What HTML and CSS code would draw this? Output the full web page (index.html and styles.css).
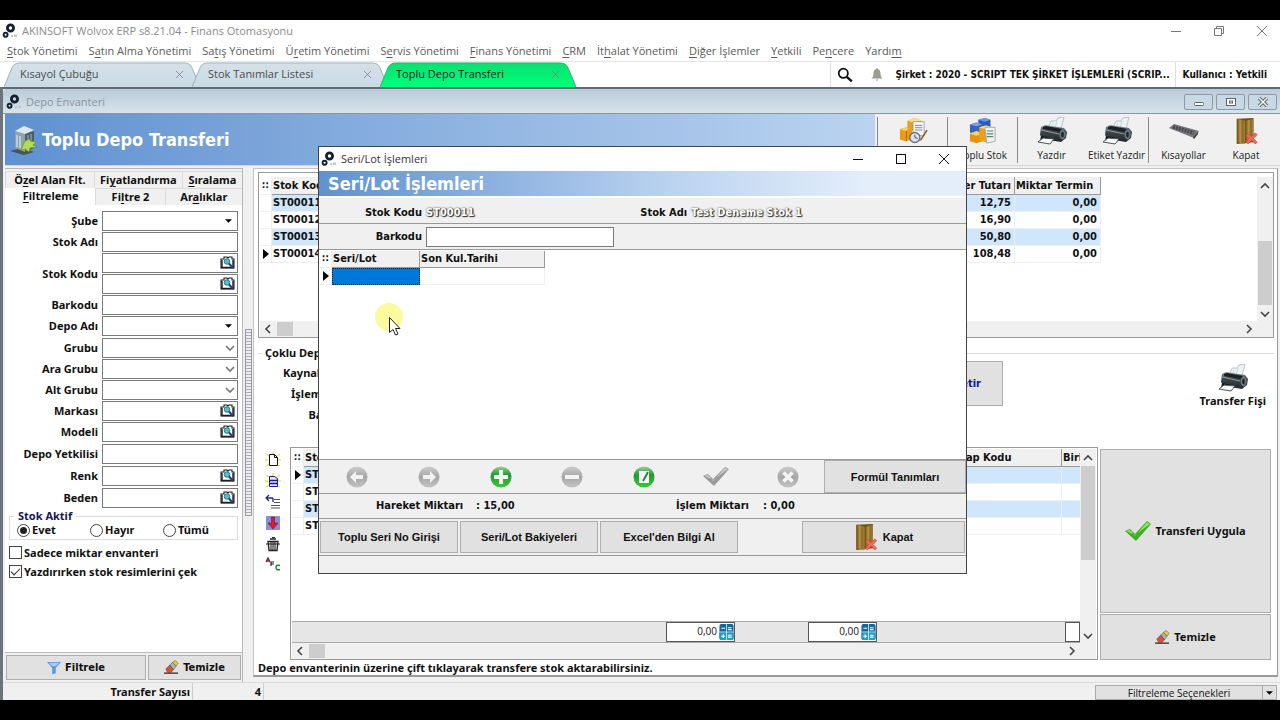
FILE: index.html
```html
<!DOCTYPE html>
<html lang="tr">
<head>
<meta charset="utf-8">
<title>AKINSOFT Wolvox ERP</title>
<link rel="stylesheet" href="styles.css">
</head>
<body>
<svg class="defs" aria-hidden="true">
  <defs>
    <linearGradient id="g-green" x1="0" y1="0" x2="0" y2="1"><stop offset="0" stop-color="#9ccf9c"/><stop offset=".4" stop-color="#1f9a2c"/><stop offset="1" stop-color="#3cc83c"/></linearGradient>
    <linearGradient id="g-gray" x1="0" y1="0" x2="0" y2="1"><stop offset="0" stop-color="#cdcdcd"/><stop offset=".5" stop-color="#a6a6a6"/><stop offset="1" stop-color="#c4c4c4"/></linearGradient>
    <linearGradient id="g-wood" x1="0" y1="0" x2="1" y2="0"><stop offset="0" stop-color="#7d5c1c"/><stop offset=".35" stop-color="#b99446"/><stop offset=".65" stop-color="#8b6a28"/><stop offset="1" stop-color="#a8843a"/></linearGradient>
    <linearGradient id="g-tab" x1="0" y1="0" x2="0" y2="1"><stop offset="0" stop-color="#d6e0e8"/><stop offset="1" stop-color="#c9dbe6"/></linearGradient>
    <linearGradient id="g-active" x1="0" y1="0" x2="0" y2="1"><stop offset="0" stop-color="#08e070"/><stop offset="1" stop-color="#00ff78"/></linearGradient>
    <linearGradient id="g-body" x1="0" y1="0" x2="0" y2="1"><stop offset="0" stop-color="#8d999f"/><stop offset=".4" stop-color="#3c464c"/><stop offset="1" stop-color="#20282c"/></linearGradient>
  </defs>
  <symbol id="i-gears" viewBox="0 0 16 16">
    <circle cx="8.500" cy="5" r="3.100" fill="none" stroke="#14202c" stroke-width="2.800"/>
    <circle cx="3.600" cy="11.800" r="2" fill="none" stroke="#14202c" stroke-width="1.900"/>
    <path d="M9 12h2v2H9zM12 11.500h3V14h-3z" fill="#c4c8cc"/>
  </symbol>
  <symbol id="i-search" viewBox="0 0 16 16"><circle cx="6.300" cy="6.300" r="4.600" fill="none" stroke="#111" stroke-width="1.800"/><path d="M9.800 9.800l5 4.600" stroke="#111" stroke-width="2.400"/></symbol>
  <symbol id="i-bell" viewBox="0 0 14 14"><path d="M7 1c3 0 3.500 3 3.600 5.400.1 2 1 3 2.200 4.200H1.200C2.400 9.400 3.300 8.400 3.400 6.400 3.500 4 4 1 7 1z" fill="#9a9d90"/><path d="M5.500 11.500h3L7 13zM6.400 0h1.200v2H6.400z" fill="#9a9d90"/></symbol>
  <symbol id="i-server" viewBox="0 0 28 32">
    <path d="M0 27l14 4 10-3-12-4z" fill="#46525c"/>
    <path d="M5 7l10 3v18L5 24z" fill="#8ea4ac"/><path d="M15 10l9-3v17l-9 4z" fill="#4c5e66"/><path d="M5 7l9-5 10 4-9 4z" fill="#dfe8ec"/>
    <path d="M7 11v12M10 12v12" stroke="#c8dade" stroke-width="1.500"/><path d="M18 11v14M21 10v13" stroke="#a4b6bc"/>
    <path d="M15 17l5-2v2l6 1-3 3 4 2-7 1-1 4-4-3-4 1 2-5z" fill="#b4da58" stroke="#6c9420" stroke-width=".7"/>
  </symbol>
  <symbol id="i-boxes" viewBox="0 0 30 30">
    <path d="M1 13l7-2 6 2v11l-7 2-6-2z" fill="#e79b18"/><path d="M1 13l7-2 6 2-6 2z" fill="#ffd068"/><path d="M8 15v11" stroke="#b06c08"/>
    <path d="M9 4l8-3 7 3v11H9z" fill="#e8a020"/><path d="M9 4l8-3 7 3-8 2z" fill="#ffdc84"/>
    <path d="M15 5h12v15H15z" fill="#f4f6f8" stroke="#8c949c" stroke-width=".8"/><path d="M17 9h8M17 11.500h8M17 14h8" stroke="#7c868e"/>
    <circle cx="17" cy="22" r="5.400" fill="#dce4ea" stroke="#66727c" stroke-width="1.500"/><path d="M17 19v3l3 1" fill="none" stroke="#445"/>
    <path d="M30 14l-7 11" stroke="#8a5a1c" stroke-width="1.600"/>
  </symbol>
  <symbol id="i-stock" viewBox="0 0 30 30">
    <path d="M10 3l7-2 6 2v11H10z" fill="#2c5cb8"/><path d="M10 3l7-2 6 2-6 2z" fill="#6c98e8"/>
    <path d="M1 8l7-2 6 2v9H1z" fill="#3466c0"/><path d="M1 8l7-2 6 2-6 2z" fill="#7ca4ec"/>
    <path d="M1 18l7-3 7 3v8l-7 2-7-2z" fill="#e39414"/><path d="M1 18l7-3 7 3-7 2z" fill="#ffd068"/>
    <path d="M11 11l7-2 7 2v14l-7 2-7-2z" fill="#eba020"/><path d="M11 11l7-2 7 2-7 2z" fill="#ffe094"/>
    <path d="M17 11h11v15l-9 2z" fill="#eef2f2" stroke="#90989c" stroke-width=".8"/><path d="M19 15h7M19 18h7M19 21h7" stroke="#5c8478" stroke-width="1.300"/>
  </symbol>
  <symbol id="i-printer" viewBox="0 0 30 28">
    <path d="M11 11l3-7 5 0 2-3 6-1-3 12z" fill="#edf3f3" stroke="#a4b0b4" stroke-width=".7"/><path d="M16 6l-2 5M20 4l-2 7" stroke="#c8d4d6"/>
    <path d="M4 10l4-2 19 3 3 4-1 6-5 4-18-3-3-4z" fill="url(#g-body)"/>
    <path d="M6 10l3-1 16 3-2 3-17-3z" fill="#1a2024"/><path d="M4 13l18 4" stroke="#8c989e" stroke-width="1.200"/>
    <ellipse cx="25.500" cy="17.500" rx="3" ry="5" fill="#6c7a82"/><ellipse cx="25.500" cy="17.500" rx="1.400" ry="3" fill="#20282c"/>
    <path d="M4 19l14 3-2 2H3z" fill="#101416"/><path d="M1 25l5-4 11 1-4 5z" fill="#fafcfc" stroke="#48545a"/>
  </symbol>
  <symbol id="i-short" viewBox="0 0 30 16"><path d="M0 5l5-4 25 7-5 7z" fill="#76767a"/><path d="M4 4l21 6" stroke="#4a4a50" stroke-width="4" stroke-dasharray="2 1"/><path d="M24 15l5-6v2l-4 5z" fill="#333"/></symbol>
  <symbol id="i-door" viewBox="0 0 24 30">
    <path d="M2 2l18-1v26l-18 2z" fill="#6e5216"/><path d="M3 2l8 2v25l-8-2z" fill="url(#g-wood)"/><path d="M12 4l8-2v23l-8 3z" fill="url(#g-wood)"/>
    <path d="M14 18l4 3 4-4 2 2-4 4 4 4-2 2-4-4-4 4-2-2 3-4-3-3z" fill="#f0685e" stroke="#c43830" stroke-width=".6"/>
  </symbol>
  <symbol id="i-book" viewBox="0 0 15 13">
    <path d="M1 3h3V1h3l1 1 1-1h3v2h2v9H1z" fill="#fff" stroke="#1c1c24" stroke-width="1.100"/><path d="M1 11.500h13M2 4v7M13 4v7" stroke="#1c1c24" stroke-width="1.400"/>
    <circle cx="7" cy="5.500" r="2.800" fill="#48c4cc" stroke="#24646c" stroke-width=".8"/><path d="M9 7.500l4 4.500" stroke="#2c3c78" stroke-width="2"/>
  </symbol>
  <symbol id="i-funnel" viewBox="0 0 16 14"><path d="M0 0h16L10 7v6l-4 1V7z" fill="#5c96e0"/><path d="M2 1h12l-4 4H6z" fill="#a4cbf6"/></symbol>
  <symbol id="i-eraser" viewBox="0 0 16 15"><path d="M0 13.500h15" stroke="#222" stroke-width="1.300"/><path d="M9 2l3-2 3 3-2 3z" fill="#f0c840" stroke="#846c20" stroke-width=".7"/><path d="M6 5l3-3 4 4-3 4z" fill="#9cb8a4" stroke="#56685c" stroke-width=".7"/><path d="M2 9l4-4 4 5-3 3H4z" fill="#d8523c" stroke="#7c3026" stroke-width=".7"/></symbol>
  <symbol id="i-check" viewBox="0 0 26 20"><path d="M0 10l5-2 5 5L22 0l4 3-15 17z" fill="#3fae28"/><path d="M1 10l4-1 5 6L22 1l3 2-15 11z" fill="#8ee060"/></symbol>
  <symbol id="i-checkgray" viewBox="0 0 26 20"><path d="M0 9l5-2 5 5L22 0l4 2-15 17z" fill="#9a9a9a"/><path d="M2 9l3-1 5 6L22 1l3 1-15 11z" fill="#cdcdcd"/></symbol>
  <symbol id="i-calc" viewBox="0 0 15 17"><rect width="15" height="17" rx="2" fill="#16679c"/><path d="M0 9h15v6q0 2-2 2H2q-2 0-2-2z" fill="#20a0bc"/><path d="M7.500 0v17M0 8.500h15" stroke="#bfe4ee"/><path d="M2 4.500h4M9 4h4M9 6h4M2 13h4M4 11v4M9 12h4M9 14h4" stroke="#fff" stroke-width="1.200"/></symbol>
  <symbol id="i-chev" viewBox="0 0 10 10"><path d="M1 3l4 4 4-4" fill="none" stroke="currentColor" stroke-width="1.600"/></symbol>
  <symbol id="i-tri" viewBox="0 0 8 4"><path d="M0 0h8L4 4z" fill="#000"/></symbol>
  <symbol id="i-row" viewBox="0 0 6 10"><path d="M0 0l6 5-6 5z" fill="#000"/></symbol>
  <symbol id="i-x" viewBox="0 0 10 10"><path d="M0 0l10 10M10 0L0 10" stroke="currentColor" fill="none"/></symbol>
</svg>

<div class="app">
  <header class="titlebar">
    <svg class="ic16"><use href="#i-gears"/></svg>
    <span>AKINSOFT Wolvox ERP s8.21.04 - Finans Otomasyonu</span>
    <div class="winbtns">
      <button aria-label="Simge durumuna küçült"><svg width="10" height="10"><path d="M0 5.500h10" stroke="#777"/></svg></button>
      <button aria-label="Geri yükle"><svg width="10" height="10"><path d="M.5 2.500h7v7h-7zM2.500 2V.5h7v7H8" fill="none" stroke="#777"/></svg></button>
      <button aria-label="Kapat"><svg width="10" height="10"><use href="#i-x"/></svg></button>
    </div>
  </header>

  <nav class="menu">
    <a href="#"><u>S</u>tok Yönetimi</a><a href="#">S<u>a</u>tın Alma Yönetimi</a><a href="#">Sa<u>t</u>ış Yönetimi</a><a href="#">Ü<u>r</u>etim Yönetimi</a><a href="#">S<u>e</u>rvis Yönetimi</a><a href="#"><u>F</u>inans Yönetimi</a><a href="#"><u>C</u>RM</a><a href="#">İt<u>h</u>alat Yönetimi</a><a href="#"><u>D</u>iğer İşlemler</a><a href="#"><u>Y</u>etkili</a><a href="#">Pe<u>n</u>cere</a><a href="#">Yardı<u>m</u></a>
  </nav>

  <div class="tabbar">
    <div class="tabs">
      <div class="tab">
        <svg class="shape" viewBox="0 0 196 26" preserveAspectRatio="none"><path d="M0 26L8 6Q10 1 16 1H180Q186 1 188 6L196 26" fill="url(#g-tab)" stroke="#9fb0bc"/></svg>
        <span>Kısayol Çubuğu</span><button aria-label="Sekmeyi kapat"><svg width="7" height="7"><use href="#i-x"/></svg></button>
      </div>
      <div class="tab">
        <svg class="shape" viewBox="0 0 196 26" preserveAspectRatio="none"><path d="M0 26L8 6Q10 1 16 1H180Q186 1 188 6L196 26" fill="url(#g-tab)" stroke="#9fb0bc"/></svg>
        <span>Stok Tanımlar Listesi</span><button aria-label="Sekmeyi kapat"><svg width="7" height="7"><use href="#i-x"/></svg></button>
      </div>
      <div class="tab active">
        <svg class="shape" viewBox="0 0 196 26" preserveAspectRatio="none"><path d="M0 26L8 6Q10 1 16 1H180Q186 1 188 6L196 26" fill="url(#g-active)" stroke="#2fb070"/></svg>
        <span>Toplu Depo Transferi</span><button aria-label="Sekmeyi kapat"><svg width="7" height="7"><use href="#i-x"/></svg></button>
      </div>
    </div>
    <div class="session">
      <svg class="ic16"><use href="#i-search"/></svg>
      <svg class="ic14"><use href="#i-bell"/></svg>
      <span class="company">Şirket : 2020 - SCRIPT TEK ŞİRKET İŞLEMLERİ (SCRIP...</span>
      <span class="user">Kullanıcı : Yetkili</span>
    </div>
  </div>

  <main class="mdi">
    <div class="mdi-title">
      <svg class="ic16"><use href="#i-gears"/></svg><span>Depo Envanteri</span>
      <div class="mdi-btns">
        <button aria-label="Küçült"><svg width="12" height="10"><rect x="1.500" y="5.500" width="9" height="3" rx="1" fill="#fff" stroke="#566"/></svg></button>
        <button aria-label="Büyüt"><svg width="12" height="10"><rect x="1.500" y="1.500" width="9" height="7" fill="#fff" stroke="#566"/><rect x="4.500" y="4" width="3" height="2" fill="#fff" stroke="#566"/></svg></button>
        <button aria-label="Kapat"><svg width="12" height="10"><path d="M2 1l8 8M10 1L2 9" stroke="#566" stroke-width="3.400"/><path d="M2 1l8 8M10 1L2 9" stroke="#fff" stroke-width="1.400"/></svg></button>
      </div>
    </div>

    <div class="banner">
      <div class="banner-title"><svg class="server"><use href="#i-server"/></svg><h1>Toplu Depo Transferi</h1></div>
      <div class="tools">
        <div class="tgroup"><button class="tool w70"><svg class="ic30"><use href="#i-boxes"/></svg>Envanter</button></div>
        <div class="tgroup"><button class="tool w70"><svg class="ic30"><use href="#i-stock"/></svg>Toplu Stok</button></div>
        <div class="tgroup"><button class="tool w67"><svg class="ic30"><use href="#i-printer"/></svg>Yazdır</button><button class="tool w63"><svg class="ic30"><use href="#i-printer"/></svg>Etiket Yazdır</button></div>
        <div class="tgroup"><button class="tool w70"><svg class="ic30"><use href="#i-short"/></svg>Kısayollar</button><button class="tool w56"><svg class="ic30"><use href="#i-door"/></svg>Kapat</button></div>
      </div>
    </div>

    <div class="work">
      <aside class="side">
        <div class="ftabs">
          <div class="frow"><button class="f1">Ö<u>z</u>el Alan Flt.</button><button class="f2">Fi<u>y</u>atlandırma</button><button class="f3"><u>S</u>ıralama</button></div>
          <div class="frow"><button class="g1 on"><u>F</u>iltreleme</button><button class="g2">Fi<u>l</u>tre 2</button><button class="g3">Ar<u>a</u>lıklar</button></div>
        </div>
        <form class="filters">
          <div class="fields">
            <label for="sube">Şube</label><div class="fld"><select id="sube"><option></option></select><svg class="tri"><use href="#i-tri"/></svg></div>
            <label for="adi">Stok Adı</label><div class="fld"><input id="adi" type="text"></div>
            <label for="kod" class="two">Stok Kodu</label><div class="fld"><input id="kod" type="text"><svg class="book"><use href="#i-book"/></svg></div>
            <div class="fld"><input aria-label="Stok Kodu bitiş" type="text"><svg class="book"><use href="#i-book"/></svg></div>
            <label for="bar">Barkodu</label><div class="fld"><input id="bar" type="text"></div>
            <label for="depo">Depo Adı</label><div class="fld"><select id="depo"><option></option></select><svg class="tri"><use href="#i-tri"/></svg></div>
          </div>
          <div class="fields groups">
            <label for="grubu">Grubu</label><div class="fld"><select id="grubu"><option></option></select><svg class="chev"><use href="#i-chev"/></svg></div>
            <label for="ara">Ara Grubu</label><div class="fld"><select id="ara"><option></option></select><svg class="chev"><use href="#i-chev"/></svg></div>
            <label for="alt">Alt Grubu</label><div class="fld"><select id="alt"><option></option></select><svg class="chev"><use href="#i-chev"/></svg></div>
            <label for="marka">Markası</label><div class="fld"><input id="marka" type="text"><svg class="book"><use href="#i-book"/></svg></div>
          </div>
          <div class="fields loose">
            <label for="model">Modeli</label><div class="fld"><input id="model" type="text"><svg class="book"><use href="#i-book"/></svg></div>
            <label for="yetkili">Depo Yetkilisi</label><div class="fld"><input id="yetkili" type="text"></div>
            <label for="renk">Renk</label><div class="fld"><input id="renk" type="text"><svg class="book"><use href="#i-book"/></svg></div>
            <label for="beden">Beden</label><div class="fld"><input id="beden" type="text"><svg class="book"><use href="#i-book"/></svg></div>
          </div>
          <fieldset class="aktif"><legend>Stok Aktif</legend>
            <label><input type="radio" name="aktif" checked>Evet</label><label><input type="radio" name="aktif">Hayır</label><label><input type="radio" name="aktif">Tümü</label>
          </fieldset>
          <label class="chk"><input type="checkbox">Sadece miktar envanteri</label>
          <label class="chk"><input type="checkbox" checked>Yazdırırken stok resimlerini çek</label>
        </form>
        <div class="side-btns">
          <button class="btn wide"><svg class="ic14"><use href="#i-funnel"/></svg>Filtrele</button>
          <button class="btn"><svg class="ic15"><use href="#i-eraser"/></svg>Temizle</button>
        </div>
      </aside>

      <div class="splitter"><div class="grip"></div></div>

      <section class="main">
        <div class="grid top">
          <div class="grid-body">
            <div class="grid-view">
              <table class="data stock">
                <colgroup><col class="c-ind"><col class="c-kod"><col><col class="c-tutar"><col class="c-termin"></colgroup>
                <thead><tr><th class="dots">∷</th><th>Stok Kodu</th><th></th><th class="r">Diğer Tutarı</th><th>Miktar Termin</th></tr></thead>
                <tbody>
                  <tr><td></td><td>ST00011</td><td></td><td class="r">12,75</td><td class="r">0,00</td></tr>
                  <tr><td></td><td>ST00012</td><td></td><td class="r">16,90</td><td class="r">0,00</td></tr>
                  <tr><td></td><td>ST00013</td><td></td><td class="r">50,80</td><td class="r">0,00</td></tr>
                  <tr><td><svg class="rowm"><use href="#i-row"/></svg></td><td>ST00014</td><td></td><td class="r">108,48</td><td class="r">0,00</td></tr>
                </tbody>
              </table>
            </div>
            <div class="hscroll"><svg class="chev left"><use href="#i-chev"/></svg><i></i><svg class="chev right"><use href="#i-chev"/></svg></div>
          </div>
          <div class="vscroll low"><svg class="chev up"><use href="#i-chev"/></svg><i></i><svg class="chev"><use href="#i-chev"/></svg></div>
        </div>

        <fieldset class="multi"><legend>Çoklu Depo Transferi</legend>
          <div class="mlabels"><span>Kaynak Depo</span><span>İşlem Tarihi</span><span>Barkodu</span></div>
          <button class="getir">Getir</button>
          <button class="fis"><svg class="ic30"><use href="#i-printer"/></svg>Transfer Fişi</button>
        </fieldset>

        <div class="lower">
          <div class="vtools">
            <button aria-label="Yeni"><svg width="16" height="16"><path d="M1 2l3 2M8 0v3M15 2l-3 2M0 8h3M16 8h-3M1 14l3-2M15 14l-2-1" stroke="#e8e060" stroke-width="1.500"/><path d="M4.500 2.500h5l3 3v8h-8z" fill="#fff" stroke="#111"/><path d="M9.500 2.500v3h3" fill="none" stroke="#111"/></svg></button>
            <button aria-label="Kaydet"><svg width="16" height="16"><path d="M1 2l3 2M8 0v3M15 2l-3 2M0 8h3M16 8h-3M1 14l3-2M15 14l-2-1" stroke="#e8e060" stroke-width="1.500"/><path d="M4.500 3.500h5l3 2v8h-8z" fill="#dfe4ff" stroke="#1c1c80"/><path d="M4 7.500h9M4 10.500h9" stroke="#1c1c80" stroke-width="1.600"/></svg></button>
            <button aria-label="Satır ekle"><svg width="16" height="16"><path d="M1 4h7M4 1L1 4l3 3M8 4v4" fill="none" stroke="#26268c" stroke-width="1.300"/><path d="M9 5.500h6M9 8.500h6M6 11.500h9M6 14h9" stroke="#555"/></svg></button>
            <button aria-label="Aktar"><svg width="16" height="16"><rect x="1" y="1" width="14" height="14" fill="#8c8cd8"/><path d="M6.500 2h3v6H13l-5 6-5-6h3.500z" fill="#d81c2c" stroke="#701030" stroke-width=".6"/></svg></button>
            <button aria-label="Sil"><svg width="16" height="16"><path d="M3 5.500h10l-1 9H4zM5 3h6" fill="#e4e4e0" stroke="#222" stroke-width="1.300"/><path d="M6 6v8M8 6v8M10 6v8M1 8h14M7 1.500h3" stroke="#222"/></svg></button>
            <button aria-label="Biçim"><svg width="16" height="14"><path d="M1 5l2-4 2 4M2 4h2" fill="none" stroke="#901c2c" stroke-width="1.300"/><path d="M6 9V5h3M6 7h3" fill="none" stroke="#222" stroke-width="1.200"/><path d="M15 8.500q-4-1-4 2t4 2" fill="none" stroke="#287838" stroke-width="1.400"/></svg></button>
          </div>
          <div class="grid bottom">
            <div class="grid-body">
              <div class="grid-view">
                <table class="data moves">
                  <colgroup><col class="c-ind"><col class="c-kod"><col><col class="c-hesap"><col class="c-birim"></colgroup>
                  <thead><tr><th class="dots">∷</th><th>Stok Kodu</th><th></th><th>Hesap Kodu</th><th>Birim</th></tr></thead>
                  <tbody>
                    <tr><td><svg class="rowm"><use href="#i-row"/></svg></td><td>ST00011</td><td></td><td></td><td></td></tr>
                    <tr><td></td><td>ST00012</td><td></td><td></td><td></td></tr>
                    <tr><td></td><td>ST00013</td><td></td><td></td><td></td></tr>
                    <tr><td></td><td>ST00014</td><td></td><td></td><td></td></tr>
                  </tbody>
                </table>
              </div>
              <div class="totals">
                <div class="total"><input aria-label="Toplam miktar" value="0,00"><svg><use href="#i-calc"/></svg></div>
                <div class="total"><input aria-label="Toplam tutar" value="0,00"><svg><use href="#i-calc"/></svg></div>
                <div class="total cut"></div>
              </div>
              <div class="hscroll"><svg class="chev left"><use href="#i-chev"/></svg><i></i><svg class="chev right"><use href="#i-chev"/></svg></div>
            </div>
            <div class="vscroll high"><svg class="chev up"><use href="#i-chev"/></svg><i></i><svg class="chev"><use href="#i-chev"/></svg></div>
          </div>
          <div class="actions">
            <button class="btn apply"><svg class="ic26"><use href="#i-check"/></svg>Transferi Uygula</button>
            <button class="btn clear"><svg class="ic15"><use href="#i-eraser"/></svg>Temizle</button>
          </div>
        </div>
        <p class="hint">Depo envanterinin üzerine çift tıklayarak transfere stok aktarabilirsiniz.</p>
      </section>
    </div>

    <footer class="status">
      <span class="s1">Transfer Sayısı</span><span class="s2">4</span>
      <div class="split"><button>Filtreleme Seçenekleri</button><button class="drop" aria-label="Seçenekler"><svg class="tri"><use href="#i-tri"/></svg></button></div>
    </footer>
  </main>
</div>

<div class="dialog" role="dialog" aria-label="Seri/Lot İşlemleri">
  <div class="d-title">
    <svg class="ic16"><use href="#i-gears"/></svg><span>Seri/Lot İşlemleri</span>
    <div class="winbtns">
      <button aria-label="Küçült"><svg width="10" height="10"><path d="M0 5.500h10" stroke="#111"/></svg></button>
      <button aria-label="Büyüt"><svg width="10" height="10"><rect x=".5" y=".5" width="9" height="9" fill="none" stroke="#111"/></svg></button>
      <button aria-label="Kapat"><svg width="10" height="10"><use href="#i-x"/></svg></button>
    </div>
  </div>
  <h2>Seri/Lot İşlemleri</h2>
  <div class="d-row info"><span class="k">Stok Kodu</span><b class="glow">ST00011</b><span class="k2">Stok Adı</span><b class="glow">Test Deneme Stok 1</b></div>
  <div class="d-row code"><label class="k" for="dbar">Barkodu</label><input id="dbar" type="text"></div>
  <div class="d-grid">
    <table class="data lots">
      <colgroup><col class="c-ind"><col class="c-lot"><col class="c-son"></colgroup>
      <thead><tr><th class="dots">∷</th><th>Seri/Lot</th><th>Son Kul.Tarihi</th></tr></thead>
      <tbody><tr><td><svg class="rowm"><use href="#i-row"/></svg></td><td class="sel"></td><td></td></tr></tbody>
    </table>
  </div>
  <div class="d-nav">
    <div class="navs">
      <button aria-label="Önceki"><svg viewBox="0 0 22 22"><circle cx="11" cy="11" r="10.500" fill="url(#g-gray)"/><path d="M4 11l6-6v4h7v4h-7v4z" fill="#f2f2f2"/></svg></button>
      <button aria-label="Sonraki"><svg viewBox="0 0 22 22"><circle cx="11" cy="11" r="10.500" fill="url(#g-gray)"/><path d="M18 11l-6-6v4H5v4h7v4z" fill="#f2f2f2"/></svg></button>
      <button aria-label="Ekle"><svg viewBox="0 0 22 22"><circle cx="11" cy="11" r="10.500" fill="url(#g-green)"/><path d="M9 4h4v5h5v4h-5v5H9v-5H4V9h5z" fill="#f0f8f0"/></svg></button>
      <button aria-label="Sil"><svg viewBox="0 0 22 22"><circle cx="11" cy="11" r="10.500" fill="url(#g-gray)"/><path d="M4 9h14v4H4z" fill="#f4f4f4"/></svg></button>
      <button aria-label="Düzenle"><svg viewBox="0 0 22 22"><circle cx="11" cy="11" r="10.500" fill="url(#g-green)"/><path d="M6 5h10v12H6z" fill="#f4faf4"/><path d="M15 6l-5 9" stroke="#287838" stroke-width="1.800"/></svg></button>
      <button aria-label="Onayla"><svg class="gcheck"><use href="#i-checkgray"/></svg></button>
      <button aria-label="İptal"><svg viewBox="0 0 22 22"><circle cx="11" cy="11" r="10.500" fill="url(#g-gray)"/><path d="M6.500 6.500l9 9M15.500 6.500l-9 9" stroke="#f4f4f4" stroke-width="3.600"/></svg></button>
    </div>
    <button class="btn arial formul">Formül Tanımları</button>
  </div>
  <div class="d-sums"><span>Hareket Miktarı</span><span>: 15,00</span><span>İşlem Miktarı</span><span>: 0,00</span></div>
  <div class="d-btns">
    <button class="btn arial">Toplu Seri No Girişi</button><button class="btn arial">Seri/Lot Bakiyeleri</button><button class="btn arial">Excel'den Bilgi Al</button>
    <button class="btn arial close"><svg class="door"><use href="#i-door"/></svg>Kapat</button>
  </div>
  <div class="d-foot"></div>
  <svg class="cursor" viewBox="0 0 28 34"><circle cx="14" cy="14" r="14" fill="#fbfa9e"/><path d="M14.500 14.500v15l3.500-3 2.500 5.500 2.500-1-2.500-5.500h4.500z" fill="#fff" stroke="#222"/></svg>
</div>
</body>
</html>
```
FILE: styles.css
```css
:root {
  --bold: "DejaVu Sans Condensed", "DejaVu Sans", sans-serif;
  --label: "Noto Sans", "Open Sans", sans-serif;
  --ui: "Open Sans", "Noto Sans", sans-serif;
  --face: #f0f0f0;
  --btn: #e1e1e1;
  --line: #a0a0a0;
  --stripe: #cfe6fb;
}
* { box-sizing: border-box; }
body {
  margin: 0;
  padding: 20px 0;
  min-height: 100vh;
  background: #000;
  display: flex;
  position: relative;
  font: bold 10px/14px var(--bold);
  color: #111;
}
button, input, select { font: inherit; color: inherit; margin: 0; }
button { border: 0; background: none; padding: 0; white-space: nowrap; }
svg { display: block; flex: none; }
.defs { position: absolute; width: 0; height: 0; }
.ic14 { width: 14px; height: 14px; }
.ic15 { width: 15px; height: 15px; }
.ic16 { width: 16px; height: 16px; }
.ic26 { width: 26px; height: 20px; }
.ic30 { width: 30px; height: 28px; }

.app { flex: 1; min-width: 0; display: flex; flex-direction: column; background: #fff; }

.titlebar { display: flex; align-items: center; gap: 4px; height: 21px; padding-left: 2px; font: 11px/16px var(--ui); color: #8a8a8a; }
.winbtns { margin-left: auto; display: flex; gap: 7px; color: #777; }
.winbtns button { width: 36px; height: 20px; display: grid; place-items: center; }

.menu { display: flex; gap: 11px; height: 20px; padding: 2px 7px 0; font: 11px/16px var(--ui); }
.menu a { color: #5a5a5a; text-decoration: none; white-space: nowrap; }
u { text-underline-offset: 2px; }

.tabbar { display: flex; height: 26px; border-top: 1px solid #e6e6e6; }
.tabs { display: flex; padding-left: 4px; }
.tab { position: relative; width: 196px; margin-right: -8px; display: flex; align-items: center; justify-content: space-between; padding: 0 17px 1px 16px; font: 11px/16px var(--ui); color: #4c4c4c; }
.tab span, .tab button { position: relative; }
.tab button { color: #777; }
.tab.active { color: #202020; }
.shape { position: absolute; inset: 0; width: 100%; height: 100%; }
.session { margin-left: auto; display: flex; align-items: center; border-left: 1px solid #ddd; padding-left: 6px; }
.session .ic14 { margin: 0 11px 0 17px; }
.company { padding-right: 5px; }
.user { align-self: stretch; display: flex; align-items: center; border-left: 1px solid #ddd; padding: 0 13px 0 7px; }

.mdi { flex: 1; display: flex; flex-direction: column; background: var(--face); border-top: 2px solid #5f6a72; border-left: 3px solid #6b747b; }
.mdi-title { display: flex; align-items: center; gap: 4px; height: 25px; padding: 1px 3px 0 3px; border-bottom: 1px solid #8a979f; border-radius: 4px 0 0 0; background: linear-gradient(#b9cbd8, #d6e3eb); font: 11px/16px var(--ui); color: #8a949b; }
.mdi-btns { margin-left: auto; display: flex; gap: 3px; }
.mdi-btns button { width: 29px; height: 16px; border: 1px solid #8d9aa6; border-radius: 2px; background: #c8d8e4; display: grid; place-items: center; }

.banner { display: flex; height: 52px; margin-left: 2px; border-bottom: 1px solid #d5d5d5; }
.banner-title { flex: 1; display: flex; align-items: center; gap: 4px; padding-left: 5px; margin-right: 2px; background: linear-gradient(90deg, #5f91d0, #bbd3f0); }
.server { width: 28px; height: 32px; }
h1, h2 { margin: 0; font: bold 18px/24px var(--bold); color: #fff; }
.tools { display: flex; padding-top: 3px; }
.tgroup { display: flex; border-left: 1px solid #888; height: 46px; }
.tool { display: flex; flex-direction: column; align-items: center; gap: 3px; font: 10px/14px var(--ui); color: #222; }
.w70 { width: 69px; } .w67 { width: 67px; } .w63 { width: 63px; } .w56 { width: 56px; margin-right: 6px; }

.work { flex: 1; display: flex; margin-left: 2px; }
.side { width: 238px; display: flex; flex-direction: column; border: 1px solid #b8b8b8; border-width: 1px 1px 0 0; margin-top: 2px; font: bold 11px/14px var(--label); }
.ftabs { padding-top: 2px; }
.frow { display: flex; height: 17px; }
.frow button { border: 1px solid #dcdcdc; border-width: 1px 0 0 1px; background: var(--face); text-align: center; }
.f1 { flex: 89; } .f2 { flex: 88; } .f3 { flex: 60; }
.g1 { flex: 89; } .g2 { flex: 68; } .g3 { flex: 76; }
.frow .on { background: #fff; border-color: #fff; padding-bottom: 2px; }
.filters { flex: 1; display: flex; flex-direction: column; gap: 1px; background: #fff; padding: 6px 4px 0 2px; border-bottom: 1px solid #bbb; }
.fields { display: grid; grid-template-columns: 91px 1fr; column-gap: 4px; row-gap: 1px; grid-auto-rows: 20px; align-items: center; }
.fields label { text-align: right; }
.fields .two { grid-row: span 2; }
.groups { margin-top: 1px; }
.loose { row-gap: 2px; }
.fld { position: relative; height: 20px; }
.fld input, .fld select { display: block; width: 100%; height: 20px; border: 1px solid #7a7a7a; background: #fff; padding: 0 4px; appearance: none; border-radius: 0; }
.fld svg { position: absolute; pointer-events: none; }
.tri { width: 7px; height: 4px; }
.fld .tri { right: 6px; top: 8px; }
.fld .chev { right: 3px; top: 5px; color: #777; }
.book { width: 15px; height: 13px; right: 3px; top: 3px; }
.chev { width: 10px; height: 10px; color: #444; }
.up { transform: rotate(180deg); }
.left { transform: rotate(90deg); }
.right { transform: rotate(-90deg); }

.aktif { margin: 0 0 0 2px; padding: 0 0 2px 7px; border: 1px solid #dcdcdc; display: grid; grid-template-columns: 73px 73px 1fr; }
.aktif legend { color: #14145c; padding: 0 4px; margin-left: -3px; }
.aktif label, .chk { display: flex; align-items: center; }
.aktif input, .chk input { appearance: none; width: 13px; height: 13px; border: 1px solid #444; background: #fff; margin: 0 2px 0 0; display: grid; place-items: center; flex: none; }
.aktif input { border-radius: 50%; }
.aktif input:checked::before { content: ""; width: 7px; height: 7px; border-radius: 50%; background: #222; }
.chk { margin: 5px 0 0 2px; height: 13px; white-space: nowrap; }
.chk input:checked::before { content: ""; width: 8px; height: 4px; border: 1px solid #222; border-width: 0 0 1px 1px; transform: rotate(-45deg); margin-bottom: 3px; }
.side-btns { display: flex; gap: 2px; padding: 2px 1px; }
.btn { display: flex; align-items: center; justify-content: center; gap: 4px; background: var(--btn); border: 1px solid #adadad; font: bold 11px/14px var(--bold); }
.side-btns .btn { height: 25px; flex: 92; }
.side-btns .wide { flex: 140; }

.splitter { width: 10px; padding: 163px 1px 0 2px; }
.grip { height: 187px; border: 1px solid #999; background: repeating-linear-gradient(#eee 0 2px, #aab 2px 3px); }

.main { flex: 1; min-width: 0; display: flex; flex-direction: column; background: #fff; border: 1px solid #c4c4c4; border-right: 1px solid #999; border-bottom: 2px solid #999; margin: 2px 2px 5px 0; padding: 3px 3px 0 4px; }
.grid { display: flex; border: 1px solid #999; background: #fff; min-width: 0; }
.grid-body { flex: 1; min-width: 0; display: flex; flex-direction: column; }
.grid-view { flex: 1; overflow: hidden; }
.top { height: 166px; padding: 4px 0 0 1px; }
.data { border-collapse: separate; border-spacing: 0; table-layout: fixed; }
.data th, .data td { height: 17px; padding: 0 3px 0 1px; text-align: left; white-space: nowrap; overflow: hidden; border: 1px solid #efefef; border-width: 0 1px 1px 0; font-weight: bold; font-size: 11px; line-height: 14px; }
.data th { background: var(--face); border-color: #999; height: 18px; }
.data th.dots, .data td:first-child { background: #fff; border-color: #eee; text-align: center; padding: 0; font-size: 10px; }
.data .r { text-align: right; }
.stock { width: 841px; }
.moves { width: 806px; }
.stock tbody tr:nth-child(odd), .moves tbody tr:nth-child(odd) { background: var(--stripe); }
.c-ind { width: 12px; } .c-kod { width: 70px; } .c-tutar { width: 84px; } .c-termin { width: 86px; } .c-hesap { width: 118px; } .c-birim { width: 36px; }
.rowm { width: 6px; height: 10px; margin: auto; }
.hscroll { display: flex; align-items: center; height: 16px; background: var(--face); padding: 0 3px; }
.hscroll i { width: 16px; height: 14px; margin-left: 4px; background: #cdcdcd; }
.hscroll .right { margin-left: auto; }
.vscroll { width: 16px; background: var(--face); display: flex; flex-direction: column; align-items: center; }
.vscroll i { width: 14px; background: #cdcdcd; }
.vscroll svg:last-child { margin-top: auto; }
.low { padding: 4px 0 18px; }
.low i { height: 64px; margin-top: auto; }
.vscroll.low svg:last-child { margin-top: 4px; }
.high { padding: 4px 0 18px; }
.high i { height: 94px; margin-top: 3px; }

.multi { margin: 8px 0 0; padding: 0 5px 0 22px; border: 1px solid #ddd; border-width: 1px 0 0; height: 101px; display: flex; align-items: flex-start; }
.multi legend { padding: 0 3px; margin-left: -18px; font: bold 11px/14px var(--label); }
.mlabels { display: grid; grid-auto-rows: 21px; justify-items: end; width: 75px; padding-top: 6px; white-space: nowrap; font: bold 11px/14px var(--label); }
.getir { width: 72px; height: 45px; margin: 1px 0 0 576px; background: var(--btn); border: 1px solid #adadad; color: #1414a0; font-size: 11px; }
.fis { margin: 4px 0 0 auto; display: flex; flex-direction: column; align-items: center; gap: 2px; font: bold 11px/14px var(--label); padding-right: 3px; }

.lower { flex: 1; display: flex; }
.vtools { width: 32px; padding: 5px 0 0 7px; display: flex; flex-direction: column; gap: 5px; }
.bottom { flex: 1; padding: 1px 1px 0; }
.totals { display: flex; background: #e6e6e6; border: 1px solid #aaa; border-width: 1px 0; height: 22px; padding-left: 374px; }
.total { position: relative; width: 69px; height: 20px; margin-right: 73px; border: 1px solid #555; background: #fff; }
.total input { display: block; width: 50px; height: 16px; border: 0; background: none; padding: 0; text-align: right; font: 10px/16px var(--ui); }
.total svg { position: absolute; right: 0; top: 1px; width: 15px; height: 16px; }
.total.cut { margin: 0 0 0 auto; width: 15px; }
.actions { width: 176px; display: flex; flex-direction: column; gap: 1px; padding: 2px 2px 0; }
.actions .btn { margin-right: 1px; font: bold 11px/14px var(--label); }
.apply { flex: 1; }
.clear { height: 46px; }
.hint { margin: 0; font: bold 11px/14px var(--label); padding: 1px 0 0; }

.status { display: flex; height: 18px; border-top: 1px solid #ddd; font: bold 11px/17px var(--label); }
.status span { text-align: right; padding-right: 2px; border-right: 1px solid #ccc; }
.s1 { width: 190px; } .s2 { width: 71px; }
.split { margin: 2px 3px 0 auto; display: flex; width: 182px; border: 1px solid #aaa; background: var(--btn); font: 10px/12px var(--ui); }
.split button:first-child { flex: 1; }
.drop { width: 14px; display: grid; place-items: center; border-left: 1px solid #aaa; }

.dialog { position: absolute; left: 318px; top: 146px; width: 649px; border: 1px solid #444; background: #fff; }
.d-title { display: flex; align-items: center; gap: 4px; height: 24px; padding: 0 4px 1px 2px; font: 11px/16px var(--ui); color: #333; }
.d-title .winbtns { color: #111; }
h2 { height: 25px; line-height: 26px; padding-left: 9px; background: linear-gradient(90deg, #5f91d0, #bbd3f0 55%, #e4eefb 85%); }
.d-row { display: flex; align-items: center; height: 26px; background: var(--face); border-bottom: 1px solid #999; font-size: 11px; }
.k { width: 103px; text-align: right; margin-right: 4px; }
.info { margin-top: 2px; padding-top: 4px; }
.glow { color: #fff; text-shadow: 1px 1px 1px #333, 0 0 2px #555, 1px 0 1px #555; }
.k2 { margin: 0 4px 0 166px; }
.code input { width: 188px; height: 20px; border: 1px solid #7a7a7a; background: #fff; padding: 0 4px; }
.d-grid { height: 209px; padding: 1px; }
.lots { width: 225px; }
.lots th { height: 17px; }
.c-lot { width: 88px; } .c-son { width: 125px; }
.lots .sel { background: #0078d7; border: 1px dotted #222; }
.d-nav { display: flex; height: 35px; background: var(--face); border: 1px solid #999; border-width: 1px 0; }
.navs { flex: 1; display: grid; grid-template-columns: repeat(7, 1fr); place-items: center; padding-left: 2px; }
.navs svg { width: 22px; height: 22px; }
.navs .gcheck { width: 26px; height: 20px; }
.formul { width: 142px; }
.btn.arial { font: bold 11px/14px "Liberation Sans", Arial, sans-serif; }
.d-sums { display: grid; grid-template-columns: 100px 200px 87px 1fr; height: 24px; align-items: center; padding-left: 57px; background: var(--face); font-size: 11px; }
.d-btns { display: flex; gap: 2px; height: 38px; padding: 2px 1px; background: var(--face); border: 1px solid #999; border-width: 1px 0; }
.d-btns .btn { width: 138px; }
.d-btns .close { width: 163px; margin-left: auto; gap: 6px; }
.door { width: 23px; height: 28px; }
.d-foot { height: 17px; background: var(--face); }
.cursor { position: absolute; left: 56px; top: 156px; width: 28px; height: 34px; }
```
